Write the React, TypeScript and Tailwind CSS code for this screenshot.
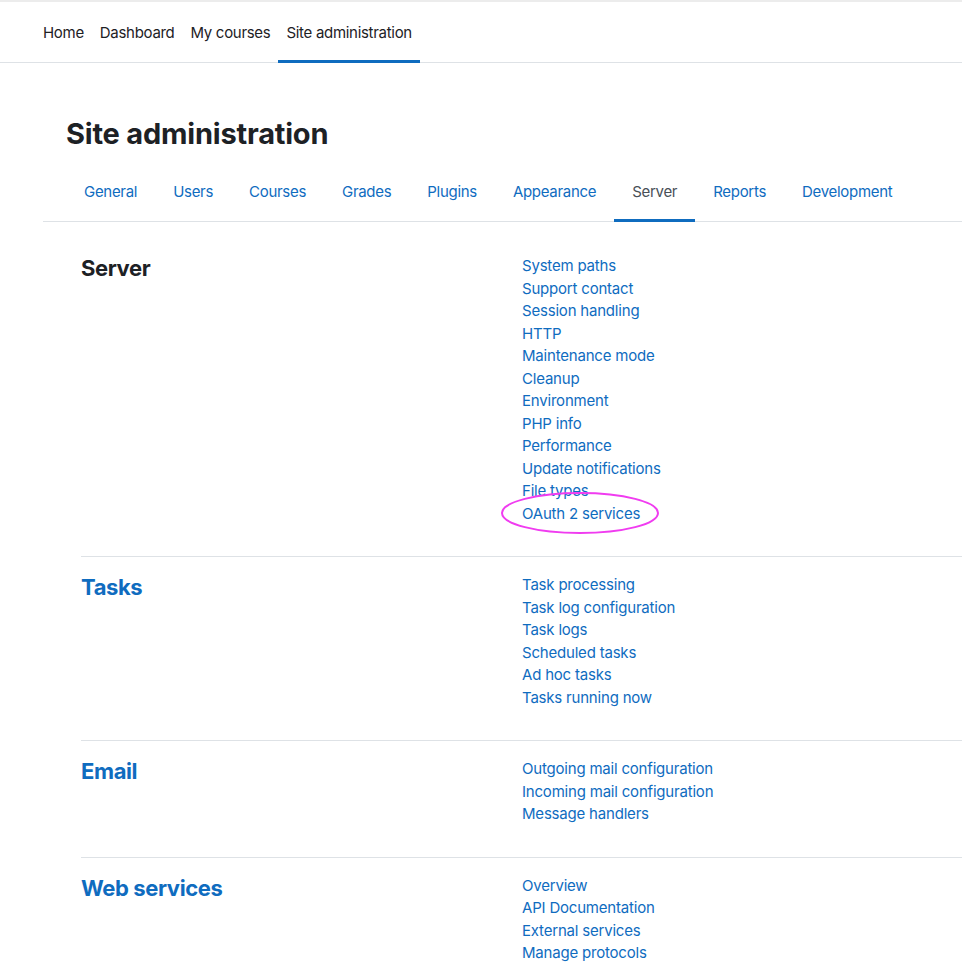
import React from "react";

const navItems = ["Home", "Dashboard", "My courses", "Site administration"];
const tabs = ["General", "Users", "Courses", "Grades", "Plugins", "Appearance", "Server", "Reports", "Development"];

const sections: { title: string; dark?: boolean; links: string[] }[] = [
  {
    title: "Server",
    dark: true,
    links: [
      "System paths",
      "Support contact",
      "Session handling",
      "HTTP",
      "Maintenance mode",
      "Cleanup",
      "Environment",
      "PHP info",
      "Performance",
      "Update notifications",
      "File types",
      "OAuth 2 services",
    ],
  },
  {
    title: "Tasks",
    links: ["Task processing", "Task log configuration", "Task logs", "Scheduled tasks", "Ad hoc tasks", "Tasks running now"],
  },
  {
    title: "Email",
    links: ["Outgoing mail configuration", "Incoming mail configuration", "Message handlers"],
  },
  {
    title: "Web services",
    links: ["Overview", "API Documentation", "External services", "Manage protocols"],
  },
];

export default function App() {
  return (
    <div className="min-h-[966px] bg-white text-[#1d2125] font-['Inter','Noto_Sans',sans-serif] overflow-hidden">
      <nav className="flex h-[63px] border-t-2 border-b border-t-[#ececec] border-b-[#dee2e6] pl-[35px]">
        {navItems.map((n, i) => (
          <div
            key={n}
            className={
              "flex items-center px-2 pt-[5px] text-[15px] tracking-[-0.3px] -mb-px border-b-[3px] " +
              (i === 3 ? "border-[#0f6cbf]" : "border-transparent")
            }
          >
            {n}
          </div>
        ))}
      </nav>
      <main className="pl-[43px]">
        <h1 className="pl-[23px] mt-[54px] text-[29px] leading-[34px] font-bold tracking-[-0.2px]">Site administration</h1>
        <ul className="flex border-b border-[#dee2e6] pl-[23px] mt-[13px]">
          {tabs.map((t) => (
            <li
              key={t}
              className={
                "-mb-px px-[18px] pt-[17px] pb-[16px] leading-[22px] text-[15px] tracking-[-0.3px] border-b-[3px] " +
                (t === "Server" ? "border-[#0f6cbf] text-[#495057]" : "border-transparent text-[#0f6cbf]")
              }
            >
              {t}
            </li>
          ))}
        </ul>
        <div className="pl-[38px] pt-4">
          {sections.map((s, si) => (
            <section key={s.title} className={"flex pt-[17px] pb-[31px] " + (si > 0 ? "border-t border-[#dee2e6]" : "")}>
              <h2
                className={
                  "w-[441px] shrink-0 text-[22px] leading-[27px] font-bold tracking-[-0.4px] " +
                  (s.dark ? "text-[#1d2125]" : "text-[#0f6cbf]")
                }
              >
                {s.title}
              </h2>
              <ul className="text-[15px] leading-[22.5px] tracking-[-0.2px] text-[#0f6cbf]">
                {s.links.map((l) => (
                  <li key={l} className="relative">
                    {l}
                    {l === "OAuth 2 services" && (
                      <svg
                        className="absolute left-[-22px] top-[-12px] pointer-events-none"
                        width="162"
                        height="46"
                        viewBox="0 0 162 46"
                      >
                        <ellipse cx="80" cy="22" rx="78" ry="20" fill="none" stroke="#f03cf0" strokeWidth="2" />
                      </svg>
                    )}
                  </li>
                ))}
              </ul>
            </section>
          ))}
        </div>
      </main>
    </div>
  );
}
